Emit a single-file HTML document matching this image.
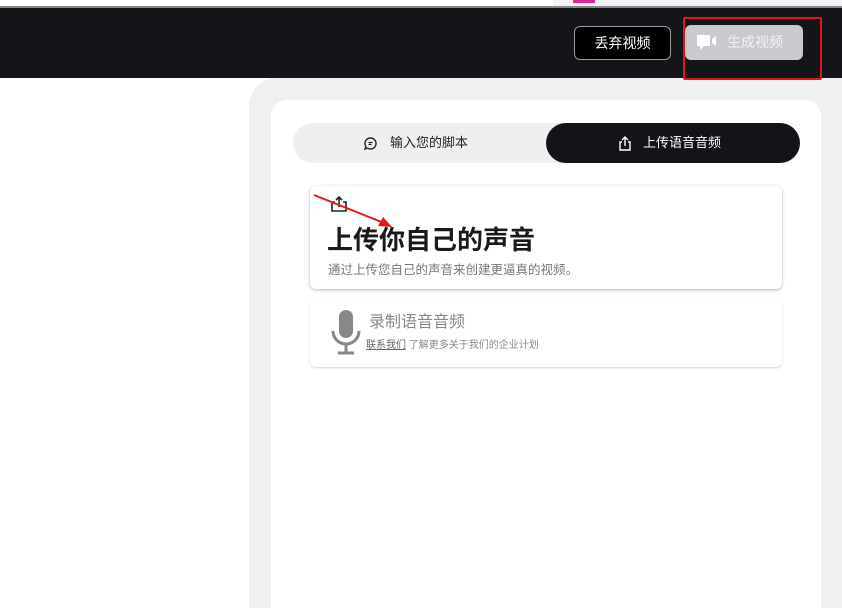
<!DOCTYPE html>
<html style="width:842px;height:608px;overflow:hidden"><head><meta charset="utf-8"><style>
*{margin:0;padding:0;box-sizing:border-box}
html,body{width:842px;height:608px;overflow:hidden}
body{background:#fff;font-family:"Liberation Sans","Noto Sans CJK SC",sans-serif;position:relative}
.abs{position:absolute}
</style></head><body>
<div class="abs" style="left:0;top:0;width:842px;height:7px;background:#f3f3f5"></div>
<div class="abs" style="left:0;top:0;width:553px;height:6px;background:#fff"></div>
<div class="abs" style="left:573px;top:0;width:22px;height:3px;background:#e0249a"></div>
<div class="abs" style="left:0;top:6px;width:842px;height:2px;background:#888"></div>
<div class="abs" style="left:0;top:8px;width:842px;height:70px;background:#141518"></div>
<div class="abs" style="left:574px;top:26px;width:97px;height:34px;border:1px solid #9a9a9e;border-radius:6px;background:#000;color:#fff;font-size:14px;line-height:32px;text-align:center">丢弃视频</div>
<div class="abs" style="left:685px;top:25px;width:118px;height:35px;border-radius:6px;background:#c9c9ce;color:#f2f2f4;font-size:14px;line-height:35px">
<svg class="abs" style="left:11px;top:9px" width="24" height="18" viewBox="0 0 24 18"><path d="M1 1h13v11H8l-4 4v-4H1z" fill="#fff"/><path d="M16 5l4-3v10l-4-3z" fill="#fff"/></svg>
<span class="abs" style="left:42px;top:0">生成视频</span></div>
<div class="abs" style="left:249px;top:78px;width:593px;height:530px;background:#f0f0f3;border-top-left-radius:28px"></div>
<div class="abs" style="left:271px;top:100px;width:550px;height:508px;background:#fff;border-radius:16px 16px 0 0"></div>
<div class="abs" style="left:683px;top:17px;width:139px;height:63px;border:2px solid #e0161b;border-radius:2px;z-index:5"></div>
<div class="abs" style="left:293px;top:123px;width:507px;height:40px;background:#efeff2;border-radius:20px"></div>
<div class="abs" style="left:546px;top:123px;width:254px;height:40px;background:#131417;border-radius:20px"></div>
<svg class="abs" style="left:364px;top:137px" width="13" height="13" viewBox="0 0 13 13"><path d="M6.5 1a5.5 5.5 0 1 1-3 10.1L1 12l.9-2.5A5.5 5.5 0 0 1 6.5 1z" fill="none" stroke="#222" stroke-width="1.4"/><path d="M4.5 5.5h4M4.5 7.5h3" stroke="#222" stroke-width="1.2"/></svg>
<div class="abs" style="left:390px;top:134px;font-size:13px;color:#222;line-height:18px">输入您的脚本</div>
<svg class="abs" style="left:618px;top:136px" width="14" height="15" viewBox="0 0 14 15"><path d="M4 6H2v8h10V6h-2M7 10V1M4 4l3-3 3 3" fill="none" stroke="#fff" stroke-width="1.4"/></svg>
<div class="abs" style="left:643px;top:134px;font-size:13px;color:#fff;line-height:18px">上传语音音频</div>
<div class="abs" style="left:310px;top:186px;width:472px;height:103px;background:#fff;border-radius:6px;box-shadow:0 1px 3px rgba(0,0,0,.3)"></div>
<svg class="abs" style="left:329px;top:194px" width="20" height="20" viewBox="0 0 20 20"><path d="M6 8H3v9h14V8h-3M10 13V3M7 6l3-3 3 3" fill="none" stroke="#222" stroke-width="1.6"/></svg>
<div class="abs" style="left:327px;top:224px;font-size:26px;font-weight:bold;color:#1a1a1a;line-height:32px">上传你自己的声音</div>
<div class="abs" style="left:328px;top:262px;font-size:12.5px;color:#777;line-height:16px">通过上传您自己的声音来创建更逼真的视频。</div>
<svg class="abs" style="left:312px;top:193px" width="82" height="36" viewBox="0 0 82 36"><path d="M2 2L72 30" stroke="#e01a1a" stroke-width="2"/><path d="M80 34L66 33 71 24z" fill="#e01a1a"/></svg>
<div class="abs" style="left:310px;top:300px;width:472px;height:67px;background:#fff;border-radius:6px;box-shadow:0 1px 2px rgba(0,0,0,.18)"></div>
<svg class="abs" style="left:331px;top:309px" width="30" height="47" viewBox="0 0 30 47"><rect x="8" y="1" width="14" height="28" rx="7" fill="#888"/><path d="M2 22a13 13 0 0 0 26 0" fill="none" stroke="#888" stroke-width="3"/><path d="M15 35v8M7 44h16" stroke="#888" stroke-width="3"/></svg>
<div class="abs" style="left:369px;top:313px;font-size:16px;color:#888;line-height:20px">录制语音音频</div>
<div class="abs" style="left:366px;top:339px;font-size:10px;color:#888;line-height:14px"><span style="text-decoration:underline;color:#666">联系我们</span> 了解更多关于我们的企业计划</div>
</body></html>
